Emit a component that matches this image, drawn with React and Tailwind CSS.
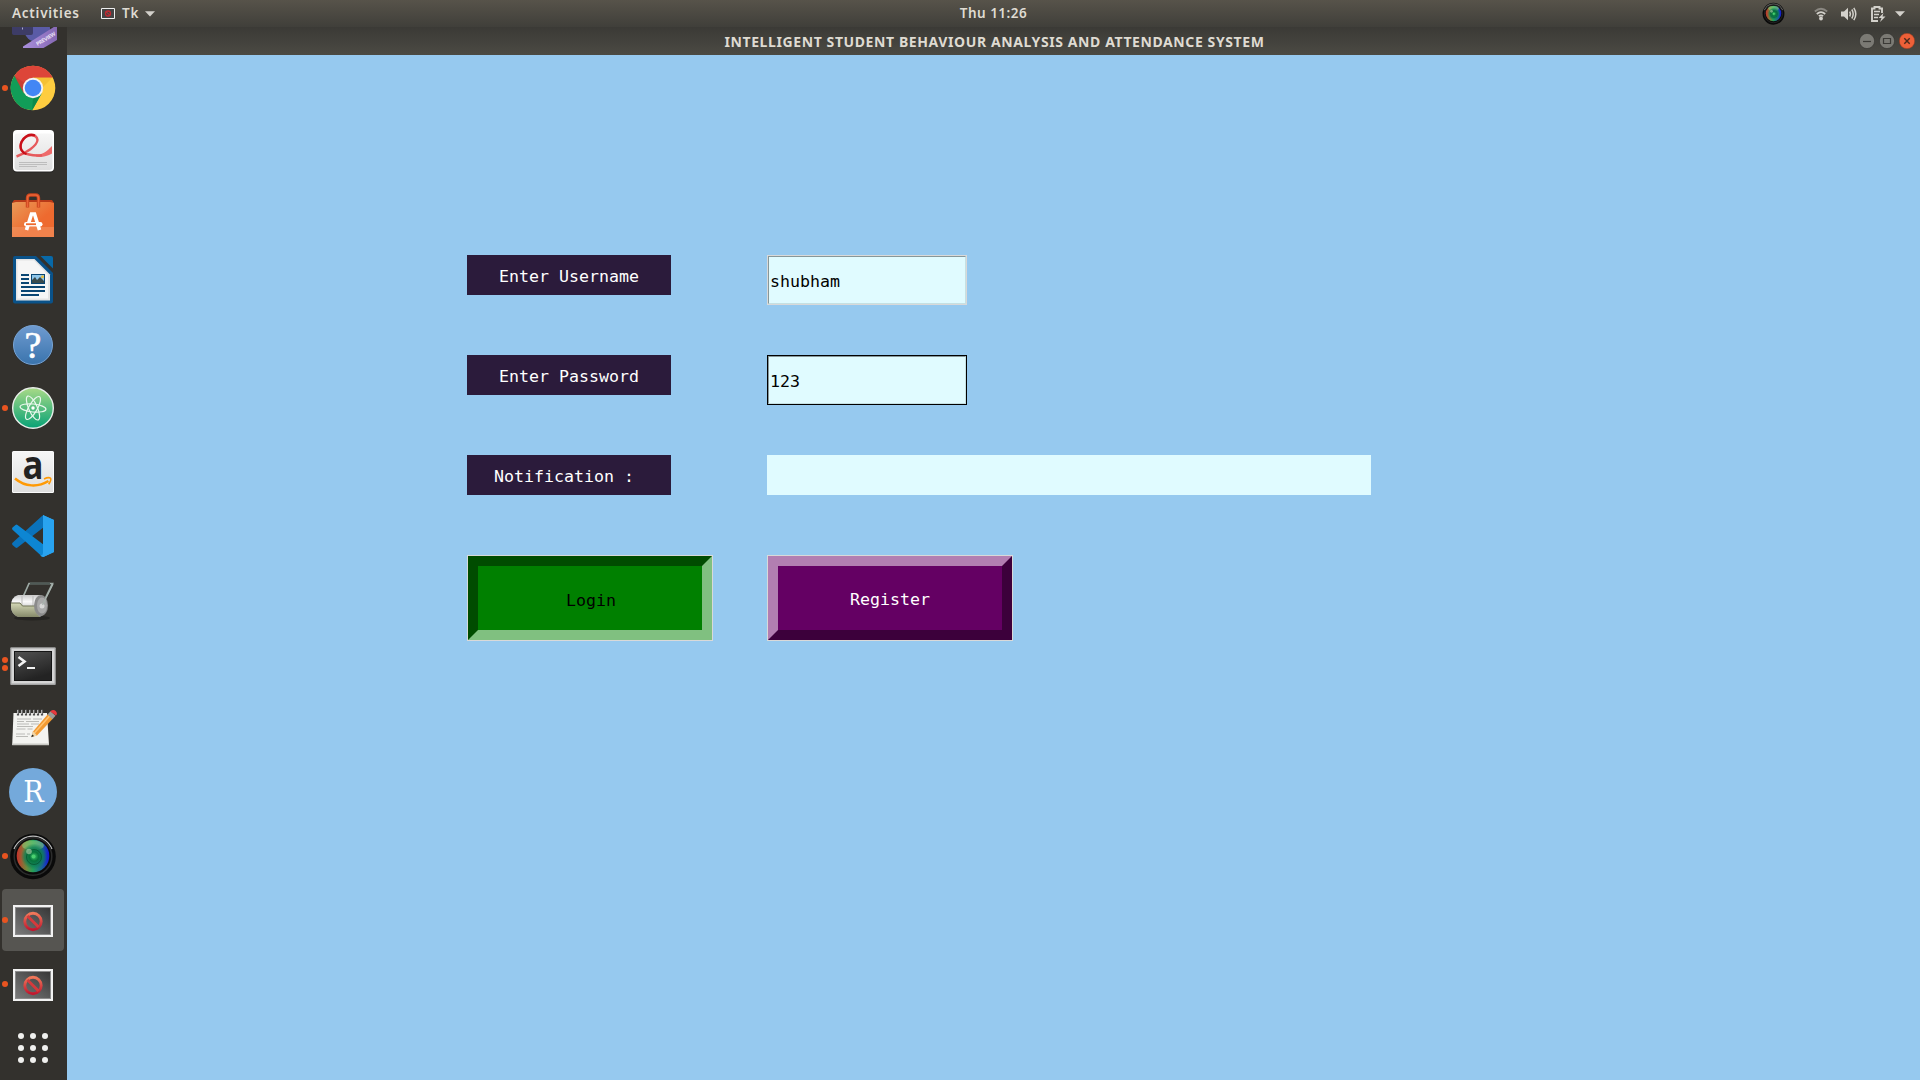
import React from "react";

const MONO = "font-['DejaVu_Sans_Mono','Liberation_Mono',monospace] text-[16.6px] leading-5";

function Icon({ children, className = "size-12" }) {
  return (
    <svg viewBox="0 0 48 48" className={className + " shrink-0 overflow-visible"} aria-hidden="true">
      {children}
    </svg>
  );
}

function Defs() {
  return (
    <svg className="absolute size-0" aria-hidden="true">
      <defs>
        <linearGradient id="paper" x1="0" y1="0" x2="0" y2="1">
          <stop offset="0" stopColor="#f6f6f6" />
          <stop offset="1" stopColor="#dedede" />
        </linearGradient>
        <linearGradient id="bag" x1="0" y1="0" x2="1" y2="1">
          <stop offset="0" stopColor="#e99a58" />
          <stop offset="0.6" stopColor="#ee6a2f" />
          <stop offset="1" stopColor="#ee6a2f" />
        </linearGradient>
        <linearGradient id="help" x1="0" y1="0" x2="0" y2="1">
          <stop offset="0" stopColor="#6f9bd0" />
          <stop offset="1" stopColor="#3a74ad" />
        </linearGradient>
        <linearGradient id="atom" x1="0" y1="0" x2="0" y2="1">
          <stop offset="0" stopColor="#a9da87" />
          <stop offset="1" stopColor="#07a276" />
        </linearGradient>
        <linearGradient id="term" x1="0" y1="0" x2="0.4" y2="1">
          <stop offset="0" stopColor="#505050" />
          <stop offset="1" stopColor="#232323" />
        </linearGradient>
        <linearGradient id="screen" x1="0" y1="1" x2="1" y2="0">
          <stop offset="0" stopColor="#7a7a7a" />
          <stop offset="1" stopColor="#383838" />
        </linearGradient>
        <linearGradient id="ban" x1="0" y1="0" x2="0" y2="1">
          <stop offset="0" stopColor="#f0785a" />
          <stop offset="1" stopColor="#c0182f" />
        </linearGradient>
        <linearGradient id="lensHue" x1="0" y1="0" x2="1" y2="0">
          <stop offset="0" stopColor="#c9302a" />
          <stop offset="0.3" stopColor="#6e8a3c" />
          <stop offset="0.5" stopColor="#22a05a" />
          <stop offset="0.78" stopColor="#1a5f9a" />
          <stop offset="1" stopColor="#1414d8" />
        </linearGradient>
        <radialGradient id="lensCore">
          <stop offset="0" stopColor="#3cc86a" />
          <stop offset="0.35" stopColor="#07733c" />
          <stop offset="0.7" stopColor="#0b7d55" stopOpacity="0.75" />
          <stop offset="1" stopColor="#0b7d55" stopOpacity="0" />
        </radialGradient>
        <linearGradient id="roll" x1="0" y1="0" x2="0" y2="1">
          <stop offset="0" stopColor="#c9c9c9" />
          <stop offset="0.3" stopColor="#fafafa" />
          <stop offset="1" stopColor="#8c8c8c" />
        </linearGradient>
        <linearGradient id="tray" x1="0" y1="0" x2="0" y2="1">
          <stop offset="0" stopColor="#d4d8b6" />
          <stop offset="1" stopColor="#85896a" />
        </linearGradient>
        <linearGradient id="ribbon" x1="0" y1="0" x2="1" y2="0">
          <stop offset="0" stopColor="#a98fdc" />
          <stop offset="1" stopColor="#8668b4" />
        </linearGradient>
      </defs>
    </svg>
  );
}

const Preview = () => (
  <Icon>
    <rect x="3" y="6" width="22" height="29" rx="3" fill="#3b3a68" />
    <circle cx="28" cy="29" r="13" fill="#5a5ba6" />
    <path d="M3 20h21v13q0 2-2 2H5q-2 0-2-2z" fill="#3d3c66" />
    <path d="M13 27.500h1v2h-1z" fill="#aaa9c8" />
    <path d="M14 46.500L48 25v15l-13.500 8H14z" fill="url(#ribbon)" />
    <text x="28.500" y="46" transform="rotate(-31 28.500 46)" fontSize="5.400" fontWeight="700" fill="#e8e0f4" fontFamily="Open Sans, sans-serif" textLength="21.500">PREVIEW</text>
  </Icon>
);

const Chrome = () => (
  <Icon>
    <circle cx="24" cy="24" r="22.300" fill="#fecd40" />
    <path d="M24 24L4.700 12.900A22.300 22.300 0 0 1 43.500 13.500H24z" fill="#dd4b3e" />
    <path d="M24 13.500H43.600A22.300 22.300 0 0 0 4.700 12.900L14.800 29z" fill="#dd4539" />
    <path d="M5.500 11.600A22.300 22.300 0 0 0 23.200 46.300L32.600 29.500 24 33.500 14.700 28.800z" fill="#119d58" />
    <path d="M23.200 46.300L32.600 29.500 24 33z" fill="#0b8a4b" />
    <path d="M33 24l10.500-10.500H24z" fill="#efb92e" opacity="0.6" />
    <path d="M14.500 29L5.500 12.200 16 19z" fill="#b93a2f" opacity="0.55" />
    <circle cx="24" cy="24" r="10.200" fill="#f3f3f3" />
    <circle cx="24" cy="24" r="8.300" fill="#4286f5" />
  </Icon>
);

const Pdf = () => (
  <Icon>
    <rect x="4" y="3" width="41" height="42" rx="4" fill="#222" opacity="0.5" />
    <rect x="4" y="2" width="41" height="41.500" rx="4" fill="#fff" />
    <rect x="5.500" y="5.500" width="38" height="36.500" rx="3" fill="url(#paper)" />
    <path d="M27 26.500c6 .5 11-3 16-8.500v7.500c-5 3-11 4-16 3z" fill="#ee6a6a" />
    <path d="M7.500 28.500C17 25 28 18 28.500 12 27.500 5 17 6 13 13c-4 7 0 12 7 13.500 4 1 8 1.300 13 .8" fill="none" stroke="#e65a5c" strokeWidth="2.400" />
    <path d="M26 7.500C20 5 15 9 12.500 14c-2.500 7 1 11 5 12" fill="none" stroke="#c8101a" strokeWidth="2.300" />
    <path d="M10 34.500h28M10 36.500h28M10 38.500h18" stroke="#bdbdbd" strokeWidth="1" />
  </Icon>
);

const Software = () => (
  <Icon>
    <path d="M3 11l2-3h38l2 3v2H3z" fill="#b83a18" />
    <path d="M3 11l4-1h34l4 1v34H3z" fill="url(#bag)" />
    <path d="M3 35h42v10H3z" fill="#f5a070" opacity="0.45" />
    <path d="M18.500 15.500V6q0-3 3-3h5q3 0 3 3v9.500" fill="none" stroke="#c8431c" strokeWidth="3.400" />
    <path d="M18.500 15V6q0-3 3-3h5q3 0 3 3v9" fill="none" stroke="#ea6436" strokeWidth="1.600" />
    <path d="M17.500 38l5-16h3l5 16" fill="none" stroke="#fff" strokeWidth="3.600" />
    <rect x="15" y="30" width="18.500" height="4.500" rx="2.200" fill="#fff" />
    <path d="M17 32.200h10" stroke="#ee6a2f" strokeWidth="1.800" />
  </Icon>
);

const Writer = () => (
  <Icon>
    <path d="M6 0h21l17 17v28.500q0 2-2 2H6q-2 0-2-2V2q0-2 2-2z" fill="#0a5289" />
    <path d="M31.500 0H42q2 0 2 2v10.500z" fill="#0869a8" />
    <path d="M7 3h18.500L41 18.500V44.500H7z" fill="#e4e4e4" />
    <path d="M8.500 4.500H25L39 19v23.500H8.500z" fill="#f6f6f6" />
    <path d="M12 19h8M12 23h8M12 27h8M12 31h24M12 35h24M12 39h18" stroke="#0a4673" strokeWidth="2" />
    <rect x="22.500" y="18.500" width="13" height="9" fill="#8fc6ea" stroke="#0a4673" />
    <path d="M23 27v-3l3-3 2 3 3-3 4 4v2z" fill="#3a4a4c" />
    <circle cx="33.500" cy="20.800" r="1.500" fill="#e8bd3c" />
  </Icon>
);

const Help = () => (
  <Icon>
    <circle cx="24" cy="25.500" r="20" fill="#1d2c3c" opacity="0.6" />
    <circle cx="24" cy="25" r="19.500" fill="url(#help)" stroke="#7aa5d4" />
    <text x="24" y="37.800" textAnchor="middle" fontSize="38" fill="#fff" stroke="#fff" strokeWidth="0.600" fontFamily="Liberation Serif, serif">?</text>
  </Icon>
);

const Atom = () => (
  <Icon>
    <circle cx="24" cy="24" r="20.300" fill="url(#atom)" stroke="#e9eeea" strokeWidth="1.400" />
    <g fill="none" stroke="#e9f7ec" strokeWidth="1.200">
      <ellipse cx="24" cy="24" rx="13" ry="4" transform="rotate(6 24 24)" />
      <ellipse cx="24" cy="24" rx="13" ry="4.300" transform="rotate(66 24 24)" />
      <ellipse cx="24" cy="24" rx="13" ry="4.300" transform="rotate(-60 24 24)" />
    </g>
    <circle cx="24" cy="24" r="1.700" fill="#fff" />
  </Icon>
);

const Amazon = () => (
  <Icon>
    <rect x="3" y="3" width="42" height="42" rx="1.500" fill="#fafafa" />
    <rect x="4" y="4" width="40" height="40" fill="url(#paper)" />
    <text x="24" y="31" textAnchor="middle" fontSize="39" fontWeight="700" fill="#222" fontFamily="Open Sans, sans-serif" textLength="21" lengthAdjust="spacingAndGlyphs">a</text>
    <path d="M6 30.500c10 8.500 23 9 33.500 2.500" fill="none" stroke="#ff9a05" strokeWidth="2.500" />
    <path d="M35 31c3-1.500 5.500-1.500 6.500-.8 1 1-.5 4-1.800 6" fill="none" stroke="#ff9a05" strokeWidth="1.600" />
  </Icon>
);

const Code = () => (
  <Icon>
    <path d="M35 3v12L8.500 35.500q-1 .8-2 0L3.500 33q-1-1.200 0-2.300L33 4z" fill="#0a72bb" />
    <path d="M35 45V33L8.500 13q-1-.8-2 0L3.500 15.500q-1 1.200 0 2.300L33 44.500z" fill="#0d86d3" />
    <path d="M34 3l11 5v32l-11 5z" fill="#2aa6f3" />
    <path d="M34 3.200L45 8v32l-10 4.800q-2 .5-4-1.300 3 .3 3-2.500z" fill="#29a3f0" />
  </Icon>
);

const Scanner = () => (
  <Icon>
    <ellipse cx="23" cy="42" rx="18" ry="2.500" fill="#1d1d1b" opacity="0.6" />
    <path d="M14 21l6-13.500h23.500L33.500 28" fill="none" stroke="#9eaaa5" strokeWidth="1.700" />
    <path d="M21 7.500h20" stroke="#4f5a56" strokeWidth="2.200" />
    <path d="M9 19h22q7 1 7 10t-7 12H9q-7-3-7-11 0-9 7-11z" fill="url(#roll)" />
    <path d="M13 20v10M24 20v12" stroke="#bbb" strokeWidth="1" />
    <path d="M2 27h10l2 3h12q0 7 5 11H10q-8-2-8-11z" fill="url(#tray)" />
    <path d="M2 27h9l2.500 3H26" fill="none" stroke="#707458" strokeWidth="1" />
    <ellipse cx="32" cy="29.500" rx="7" ry="10.500" fill="#8b8b8b" />
    <ellipse cx="33" cy="29.500" rx="5" ry="8" fill="#a9a9a9" />
    <circle cx="33" cy="30" r="2.500" fill="#d8d8d8" />
    <path d="M33.500 29L44 8" stroke="#a8b3ae" strokeWidth="1.300" />
  </Icon>
);

const Terminal = () => (
  <Icon>
    <rect x="1.200" y="7.300" width="45.600" height="37.700" rx="1" fill="#a5a5a5" />
    <rect x="2.500" y="8.500" width="43" height="35" fill="#d5d5d5" />
    <rect x="5" y="11" width="38" height="30" fill="#151515" />
    <rect x="6" y="12" width="36" height="28" fill="url(#term)" />
    <path d="M9.500 17l6 4.500-6 4.500" fill="none" stroke="#f2f2f2" strokeWidth="2.600" />
    <path d="M18 28h8" stroke="#f2f2f2" strokeWidth="2" />
  </Icon>
);

const Notes = () => (
  <Icon>
    <path d="M4.500 9H38l2 32H3.200z" fill="#f3f3f0" />
    <path d="M3.200 39.500H40v1.700H3.200z" fill="#c9c9c4" />
    <path d="M9 5.500v6M13 5.500v6M17 5.500v6M21 5.500v6M25 5.500v6M29 5.500v6M33 5.500v6" stroke="#4c4c4c" strokeWidth="2.200" />
    <path d="M8.700 6v4M12.700 6v4M16.700 6v4M20.700 6v4M24.700 6v4M28.700 6v4M32.700 6v4" stroke="#d8d8d8" strokeWidth="0.900" />
    <path d="M8 15h14m2 0h9M8 17.500h7m2 0h13M8 20h12m2 0h8M8 22.500h16M7.500 25h9m2 0h5M7 30h9m2 0h3M7 32.500h12" stroke="#b4b4b0" strokeWidth="0.900" />
    <path d="M22.500 33L24 27.500 39 10l5 4.500L28 31.500z" fill="#f29a32" />
    <path d="M25.500 29L41 11.500" stroke="#ffc370" strokeWidth="1.500" />
    <path d="M22.300 33.300l1.700-6 4 4.200z" fill="#efd5a8" />
    <path d="M22.300 33.300l.8-2.800 2 1.600z" fill="#222" />
    <path d="M38.500 10.500l3-3.200 5 4.500-3 3.400z" fill="#9c9c98" />
    <path d="M41.200 7.500q3-2.500 5.500-.5 2.300 2.300.3 4.500z" fill="#e8383d" />
  </Icon>
);

const RStudio = () => (
  <Icon>
    <circle cx="24" cy="24" r="24" fill="#74a9db" />
    <text x="24.500" y="33.500" textAnchor="middle" fontSize="29" fill="#fff" fontFamily="DejaVu Serif, Liberation Serif, serif" textLength="20.500" lengthAdjust="spacingAndGlyphs">R</text>
  </Icon>
);

const Lens = ({ className }) => (
  <Icon className={className}>
    <circle cx="24" cy="24.500" r="22.800" fill="#0a0a0a" />
    <path d="M5 17A20.500 20.500 0 0 1 43 17" fill="none" stroke="#bcbcbc" strokeWidth="1.200" />
    <circle cx="24" cy="24.500" r="18.800" fill="none" stroke="#2c2c2c" strokeWidth="1.500" />
    <circle cx="24" cy="24" r="16.300" fill="url(#lensHue)" />
    <ellipse cx="24" cy="13.500" rx="11" ry="5" fill="#8dcf7c" opacity="0.55" />
    <circle cx="25" cy="24.500" r="13" fill="url(#lensCore)" />
    <circle cx="25" cy="25" r="7.500" fill="none" stroke="#064f2c" strokeWidth="1" opacity="0.7" />
    <circle cx="24.500" cy="24.500" r="2" fill="#4bd070" />
    <circle cx="20" cy="19.500" r="2.800" fill="#b4d0a8" opacity="0.6" />
  </Icon>
);

const TkWindow = () => (
  <Icon>
    <rect x="4" y="9" width="40" height="32" fill="#f2f2f2" />
    <rect x="6" y="11" width="36" height="28" fill="#8b8b8b" />
    <rect x="7" y="12" width="34" height="26" fill="url(#screen)" />
    <circle cx="24" cy="25.500" r="8.200" fill="none" stroke="url(#ban)" strokeWidth="2.900" />
    <path d="M18.500 20l11 11" stroke="#d63a3c" strokeWidth="2.900" />
  </Icon>
);

const Apps = () => (
  <Icon>
    {[12, 24, 36].map((y) => [12, 24, 36].map((x) => <circle key={x + "-" + y} cx={x} cy={y} r="3" fill="#f0f0ee" />))}
  </Icon>
);

const DOCK = [
  { id: "chrome", Glyph: Chrome, windows: 1 },
  { id: "pdf", Glyph: Pdf },
  { id: "software", Glyph: Software },
  { id: "writer", Glyph: Writer },
  { id: "help", Glyph: Help },
  { id: "atom", Glyph: Atom, windows: 1 },
  { id: "amazon", Glyph: Amazon },
  { id: "code", Glyph: Code },
  { id: "scanner", Glyph: Scanner },
  { id: "terminal", Glyph: Terminal, windows: 2 },
  { id: "notes", Glyph: Notes },
  { id: "rstudio", Glyph: RStudio },
  { id: "lens", Glyph: Lens, windows: 1 },
  { id: "tk-a", Glyph: TkWindow, windows: 1, active: true },
  { id: "tk-b", Glyph: TkWindow, windows: 1 },
  { id: "apps", Glyph: Apps },
];

function Dock() {
  return (
    <nav className="flex w-[67px] shrink-0 flex-col bg-[#33312d]">
      <div className="flex h-[29px] flex-col items-center justify-end overflow-hidden pb-2 pr-px">
        <Preview />
      </div>
      {DOCK.map(({ id, Glyph, windows = 0, active }) => (
        <div key={id} className="flex h-16 items-center">
          <div className={"ml-0.5 flex h-[62px] w-[62px] items-center rounded " + (active ? "bg-[#565551]" : "")}>
            <div className="flex w-[7px] shrink-0 flex-col gap-[2.500px]">
              {Array.from({ length: windows }, (_, i) => (
                <span key={i} className="size-[6px] rounded-full bg-[#e95420]" />
              ))}
            </div>
            <Glyph />
          </div>
        </div>
      ))}
    </nav>
  );
}

const Caret = () => (
  <svg viewBox="0 0 10 6" className="h-[6px] w-[10px]" aria-hidden="true">
    <path d="M0 .3h10L5 5.500z" fill="#d3d1cb" />
  </svg>
);

function TopBar() {
  return (
    <header className="grid h-[27px] shrink-0 grid-cols-[1fr_auto_1fr] items-center bg-linear-to-b from-[#57534a] to-[#403f3a] font-['Noto_Sans','Open_Sans',sans-serif] text-[13.500px] font-semibold text-[#dfdbd2]">
      <div className="flex items-center pl-3">
        <span className="w-[89px] tracking-[0.75px]">Activities</span>
        <svg viewBox="0 0 14 11" className="mr-[7px] h-[11px] w-[14px]" aria-hidden="true">
          <path d="M.5.500h13v10H.5z" fill="#444" stroke="#eee" />
          <circle cx="7" cy="5.500" r="2.500" fill="none" stroke="#c3272f" strokeWidth="1.300" />
          <path d="M5.300 3.800l3.400 3.400" stroke="#d0333a" />
        </svg>
        <span className="w-[23px] tracking-[0.75px]">Tk</span>
        <Caret />
      </div>
      <span className="pl-[67px] tracking-[0.5px]">Thu 11:26</span>
      <div className="flex items-center justify-end pr-[15px]">
        <Lens className="mr-[29px] size-[23px]" />
        <svg viewBox="0 0 14 14" className="mr-[13px] size-[14px]" aria-hidden="true">
          <g fill="none" stroke="#d3d1cb" strokeWidth="1.700">
            <path d="M.8 4.500Q7-1 13.200 4.500" opacity="0.45" />
            <path d="M2.800 7Q7 3.300 11.200 7" />
            <path d="M4.800 9.200Q7 7.500 9.200 9.200" />
          </g>
          <circle cx="7" cy="11.500" r="1.900" fill="#d3d1cb" />
        </svg>
        <svg viewBox="0 0 16 14" className="mr-[14px] h-[14px] w-[16px]" aria-hidden="true">
          <path d="M0 4.500h3L7 .8v12.400L3 9.500H0z" fill="#d3d1cb" />
          <g fill="none" stroke="#d3d1cb" strokeWidth="1.500">
            <path d="M8.700 4.500q1.500 2.500 0 5" />
            <path d="M10.800 2.500q2.800 4.500 0 9" />
            <path d="M12.800.800q4 6.200 0 12.400" />
          </g>
        </svg>
        <svg viewBox="0 0 15 16" className="mr-[9px] h-4 w-[15px]" aria-hidden="true">
          <path d="M7 15H1V2.500h2.500V1h5v1.500H11V7" fill="none" stroke="#d3d1cb" strokeWidth="1.900" />
          <path d="M3 5.500h6M3 8.500h5M3 11.500h4" stroke="#d3d1cb" strokeWidth="1.600" />
          <path d="M12.500 7L7.500 12h3l-1.500 4 5.500-5.500h-3z" fill="#d3d1cb" />
        </svg>
        <Caret />
      </div>
    </header>
  );
}

function TitleBar() {
  return (
    <div className="flex h-7 shrink-0 items-center bg-linear-to-b from-[#3b3a36] to-[#4b4a44] pr-[5px]">
      <h1 className="flex-1 pl-[63px] text-center font-['Noto_Sans','Open_Sans',sans-serif] text-[14px] font-bold tracking-[0.6px] text-[#dfdbd2]">
        INTELLIGENT STUDENT BEHAVIOUR ANALYSIS AND ATTENDANCE SYSTEM
      </h1>
      <div className="flex gap-1">
        <svg viewBox="0 0 16 16" className="size-4" aria-hidden="true">
          <circle cx="8" cy="8" r="7.600" fill="#7b7a74" stroke="#33322f" strokeWidth="0.600" />
          <path d="M4 8.500h8" stroke="#3b3a36" strokeWidth="1.200" />
        </svg>
        <svg viewBox="0 0 16 16" className="size-4" aria-hidden="true">
          <circle cx="8" cy="8" r="7.600" fill="#7b7a74" stroke="#33322f" strokeWidth="0.600" />
          <path d="M4.500 5.500h7v5h-7z" fill="none" stroke="#3b3a36" strokeWidth="1.200" />
        </svg>
        <svg viewBox="0 0 16 16" className="size-4" aria-hidden="true">
          <circle cx="8" cy="8" r="7.700" fill="#ee6038" stroke="#8c3a20" strokeWidth="0.500" />
          <path d="M5.300 5.300l5.400 5.400M10.700 5.300l-5.400 5.400" stroke="#4a2a1c" strokeWidth="1.400" />
        </svg>
      </div>
    </div>
  );
}

const Label = ({ children }) => (
  <div className={"flex h-10 w-[204px] items-center justify-center whitespace-pre bg-[#2b1b3b] pt-1 text-white " + MONO}>{children}</div>
);

const Entry = ({ value, name, focused }) => (
  <div className={"h-[50px] w-[200px] border " + (focused ? "border-black" : "border-[#d9d9d9]")}>
    <input
      name={name}
      aria-label={name}
      defaultValue={value}
      className={"h-12 w-full border border-t-[#87979a] border-r-[#c5e0e3] border-b-[#c5e0e3] border-l-[#87979a] bg-[#e0fbff] pt-0.5 pl-px text-black outline-none " + MONO}
    />
  </div>
);

export default function App() {
  return (
    <div className="flex h-[1080px] w-[1920px] flex-col overflow-hidden bg-[#96c9ef]">
      <Defs />
      <TopBar />
      <div className="flex min-h-0 flex-1">
        <Dock />
        <div className="flex min-w-0 flex-1 flex-col">
          <TitleBar />
          <main className="grid auto-rows-[100px] grid-cols-[300px_604px] pt-[200px] pl-[400px]">
            <Label>Enter Username</Label>
            <Entry name="username" value="shubham" />
            <Label>Enter Password</Label>
            <Entry name="password" value="123" focused />
            <Label>{"Notification : "}</Label>
            <div className="h-10 bg-[#e0fbff]" />
            <div className="h-[86px] w-[246px] border border-[#d9d9d9]">
              <button className={"h-full w-full border-[10px] border-t-[#004c00] border-r-[#80c080] border-b-[#80c080] border-l-[#004c00] bg-[#008000] pt-1.5 pl-0.5 text-black " + MONO}>
                Login
              </button>
            </div>
            <div className="h-[86px] w-[246px] border border-[#d9d9d9]">
              <button className={"h-full w-full border-[10px] border-t-[#b27eb1] border-r-[#3c003b] border-b-[#3c003b] border-l-[#b27eb1] bg-[#640063] pt-1 text-white " + MONO}>
                Register
              </button>
            </div>
          </main>
        </div>
      </div>
    </div>
  );
}
